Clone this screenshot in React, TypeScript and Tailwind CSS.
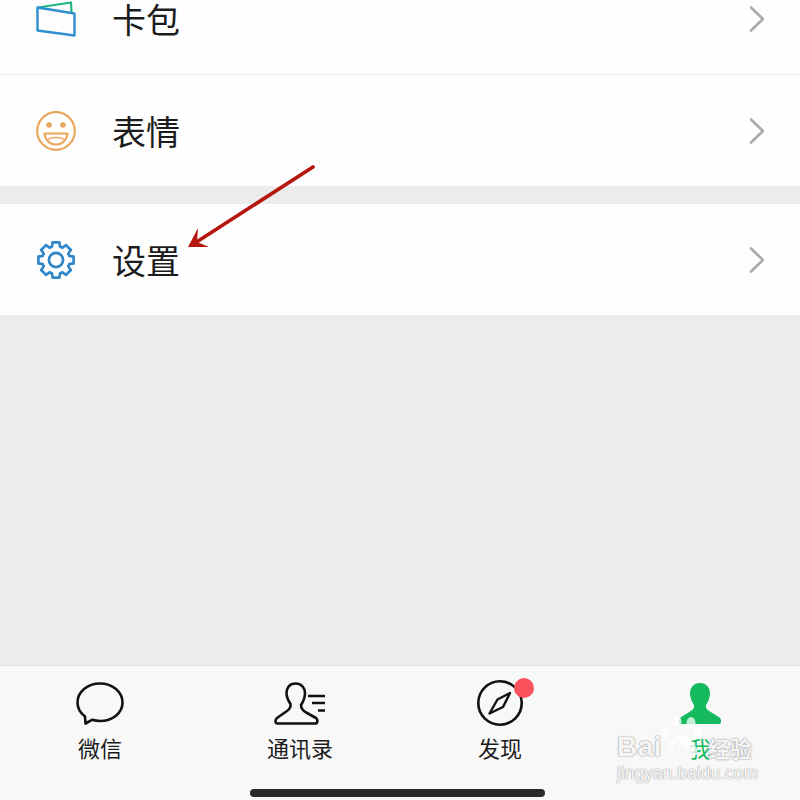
import type { ReactNode } from 'react';

const CJK = "font-['Noto_Sans_CJK_SC','Noto_Sans',sans-serif]";
const LATIN = "[font-family:'Liberation_Sans',sans-serif]";

const gearPoints = () => {
  const pts: string[] = [];
  for (let i = 0; i < 8; i++) {
    const a = (i * Math.PI) / 4 - Math.PI / 2;
    [
      [14.6, -0.3],
      [18.8, -0.19],
      [18.8, 0.19],
      [14.6, 0.3],
    ].forEach(([r, d]) => {
      pts.push(`${(21 + r * Math.cos(a + d)).toFixed(2)},${(21 + r * Math.sin(a + d)).toFixed(2)}`);
    });
  }
  return pts.join(' ');
};

const WalletIcon = () => (
  <svg width="40" height="36" viewBox="0 0 40 36" fill="none" strokeLinejoin="round" strokeLinecap="round">
    <path d="M2 6.5 L35 1.5 L35.5 11" stroke="#1fb584" strokeWidth="2.2" />
    <path d="M1.5 6.5 L38.5 12.5 V34.5 L1.5 29.5 Z" stroke="#2f8fd0" strokeWidth="2.4" />
  </svg>
);

const SmileIcon = () => (
  <svg width="40" height="40" viewBox="0 0 40 40" fill="none" stroke="#e8a85c" strokeWidth="2.2">
    <circle cx="20" cy="20" r="18.8" />
    <circle cx="13" cy="14" r="2.8" fill="#e8a85c" stroke="none" />
    <circle cx="27" cy="14" r="2.8" fill="#e8a85c" stroke="none" />
    <path d="M8.5 22.5 H31.5 C31 29 26 33.5 20 33.5 C14 33.5 9 29 8.5 22.5 Z" strokeLinejoin="round" />
    <path d="M12 28 C16 26 24 26 28 28" strokeWidth="1.6" />
  </svg>
);

const GearIcon = () => (
  <svg width="42" height="42" viewBox="0 0 42 42" fill="none" stroke="#2f86c8" strokeWidth="2.8" strokeLinejoin="round">
    <polygon points={gearPoints()} />
    <circle cx="21" cy="21" r="7.4" />
  </svg>
);

const Chevron = () => (
  <svg width="16" height="28" viewBox="0 0 16 28" fill="none" stroke="#aaaaaa" strokeWidth="2.6" strokeLinecap="round" strokeLinejoin="round">
    <path d="M3 2.5 L15 14 L3 25.5" />
  </svg>
);

const Row = ({
  icon,
  title,
  divider,
}: {
  icon: ReactNode;
  title: string;
  divider?: boolean;
}) => (
  <div className="relative flex h-[111px] shrink-0 items-center bg-[#fefefe] pl-[36px] pr-[36px]">
    <div className="flex w-[40px] justify-center">{icon}</div>
    <span className={`ml-[36px] flex-1 text-[34px] leading-none text-[#1c1c1c] ${CJK}`}>{title}</span>
    <Chevron />
    {divider && <div className="absolute bottom-[-1px] left-[117px] right-0 h-px bg-[#eeeeee]" />}
  </div>
);

const ChatIcon = () => (
  <svg width="48" height="48" viewBox="0 0 48 48" fill="none" stroke="#111" strokeWidth="2.6" strokeLinejoin="round">
    <path d="M9 36.5 C4.5 33 1.5 28 1.5 22.5 C1.5 12 11.5 3.5 24 3.5 C36.5 3.5 46.5 12 46.5 22.5 C46.5 33 36.5 41 24 41 C21 41 18.5 40.5 16 39.8 L9.5 43.5 Z" />
  </svg>
);

const ContactsIcon = () => (
  <svg width="52" height="48" viewBox="0 0 52 48" fill="none" stroke="#111" strokeWidth="2.6" strokeLinejoin="round">
    <path d="M21.5 3.5 C15.5 3.5 12.5 8 12.5 13 C12.5 18 14.5 21 16.5 24 C17 27 16 29 13 31 L3 38 C1 39.5 0.8 43.5 3.5 43.5 L41 43.5 C44 43.5 44 39.5 42 38 L33 33 C29 31 27 29 27 25 C29 22 31 18 31 13 C31 8 27.5 3.5 21.5 3.5 Z" />
    <path d="M34 16 H51 M38 23 H51 M44 30.5 H51" />
  </svg>
);

const CompassIcon = () => (
  <div className="relative h-[48px] w-[48px]">
    <svg width="48" height="48" viewBox="0 0 48 48" fill="none" stroke="#111" strokeWidth="2.6" strokeLinejoin="round">
      <circle cx="24" cy="23" r="21.7" />
      <path d="M34 13 L21.5 19.5 L13.5 33.5 L27 27 Z" strokeWidth="2.4" />
    </svg>
    <span className="absolute left-[38px] top-[-2px] h-[20px] w-[20px] rounded-full bg-[#f9525a]" />
  </div>
);

const MeIcon = () => (
  <svg width="48" height="48" viewBox="0 0 48 48" fill="#15ba5f">
    <path d="M24 3 C17.5 3 14 8 14 13.5 C14 18 16 22 18 25 C18.5 28 17 30 14 31.5 L4.5 37.5 C2.5 39 2 44 5 44 L43 44 C46 44 45.5 39 43.5 37.5 L34 31.5 C31 30 29.5 28 30 25 C32 22 34 18 34 13.5 C34 8 30.5 3 24 3 Z" />
  </svg>
);

const Tab = ({ icon, label, active }: { icon: ReactNode; label: string; active?: boolean }) => (
  <div className="flex flex-col items-center">
    <div className="flex h-[48px] items-start justify-center">{icon}</div>
    <span
      className={`mt-[4px] text-[22px] leading-[30px] ${CJK} ${active ? 'text-[#15ba5f]' : 'text-[#1c1c1c]'}`}
    >
      {label}
    </span>
  </div>
);

export default function App() {
  return (
    <div className="relative flex h-[800px] w-[800px] flex-col overflow-hidden bg-[#ececec]">
      <div className="mt-[-37px]">
        <Row icon={<WalletIcon />} title="卡包" divider />
      </div>
      <div className="mt-px">
        <Row icon={<SmileIcon />} title="表情" />
      </div>
      <div className="mt-[18px]">
        <Row icon={<GearIcon />} title="设置" />
      </div>

      <div className="mt-auto h-[135px] border-t border-[#e2e2e2] bg-[#f8f8f8] pt-[14px]">
        <div className="grid grid-cols-4">
          <Tab icon={<ChatIcon />} label="微信" />
          <Tab icon={<ContactsIcon />} label="通讯录" />
          <Tab icon={<CompassIcon />} label="发现" />
          <Tab icon={<MeIcon />} label="我" active />
        </div>
      </div>

      {/* home indicator */}
      <div className="absolute bottom-[3px] left-[250px] h-[8px] w-[295px] rounded-full bg-[#2a2a2a]" />

      {/* red annotation arrow */}
      <svg className="absolute left-0 top-0" width="800" height="300" viewBox="0 0 800 300" fill="none">
        <path d="M313 167 L195 243" stroke="#b5170f" strokeWidth="3.6" strokeLinecap="round" />
        <path d="M188 247 L198 228 L197 242 L209 247 Z" fill="#b5170f" />
      </svg>

      {/* baidu watermark */}
      <div className="absolute left-[612px] top-[716px] h-[70px] w-[146px]">
        <span className={`absolute left-[5px] top-[17px] text-[28px] font-bold leading-[28px] tracking-[0.5px] text-white/90 ${LATIN} [text-shadow:0_0_2px_#999999,0_0_1px_#999999]`}>
          Bai
        </span>
        <span className={`absolute left-[58px] top-[26px] text-[18px] font-bold leading-[18px] text-white/80 ${LATIN} [text-shadow:0_0_2px_#999999]`}>
          du
        </span>
        <span className={`absolute left-[96px] top-[20px] text-[22px] font-bold leading-[22px] text-white/90 [text-shadow:0_0_2px_#999999,0_0_1px_#999999] ${CJK}`}>
          经验
        </span>
        <span className={`absolute left-[5px] top-[47px] whitespace-nowrap text-[17.5px] leading-[20px] text-white/95 ${LATIN} [text-shadow:0_0_1.5px_#a0a0a0,0_0_1px_#a0a0a0]`}>
          jingyan.baidu.com
        </span>
        <svg className="absolute left-[44px] top-0" width="50" height="46" viewBox="0 0 50 46" fill="#ffffff" fillOpacity="0.75">
          <ellipse cx="11" cy="16" rx="4.5" ry="6" />
          <ellipse cx="21" cy="5.5" rx="4.5" ry="5.5" />
          <ellipse cx="35" cy="7" rx="4.5" ry="6" />
          <ellipse cx="42" cy="17" rx="4" ry="5.5" />
          <path d="M25 19 C18 19 10 30 12 38 C15 45 36 45 41 38 C43 30 32 19 25 19 Z" />
        </svg>
      </div>
    </div>
  );
}
